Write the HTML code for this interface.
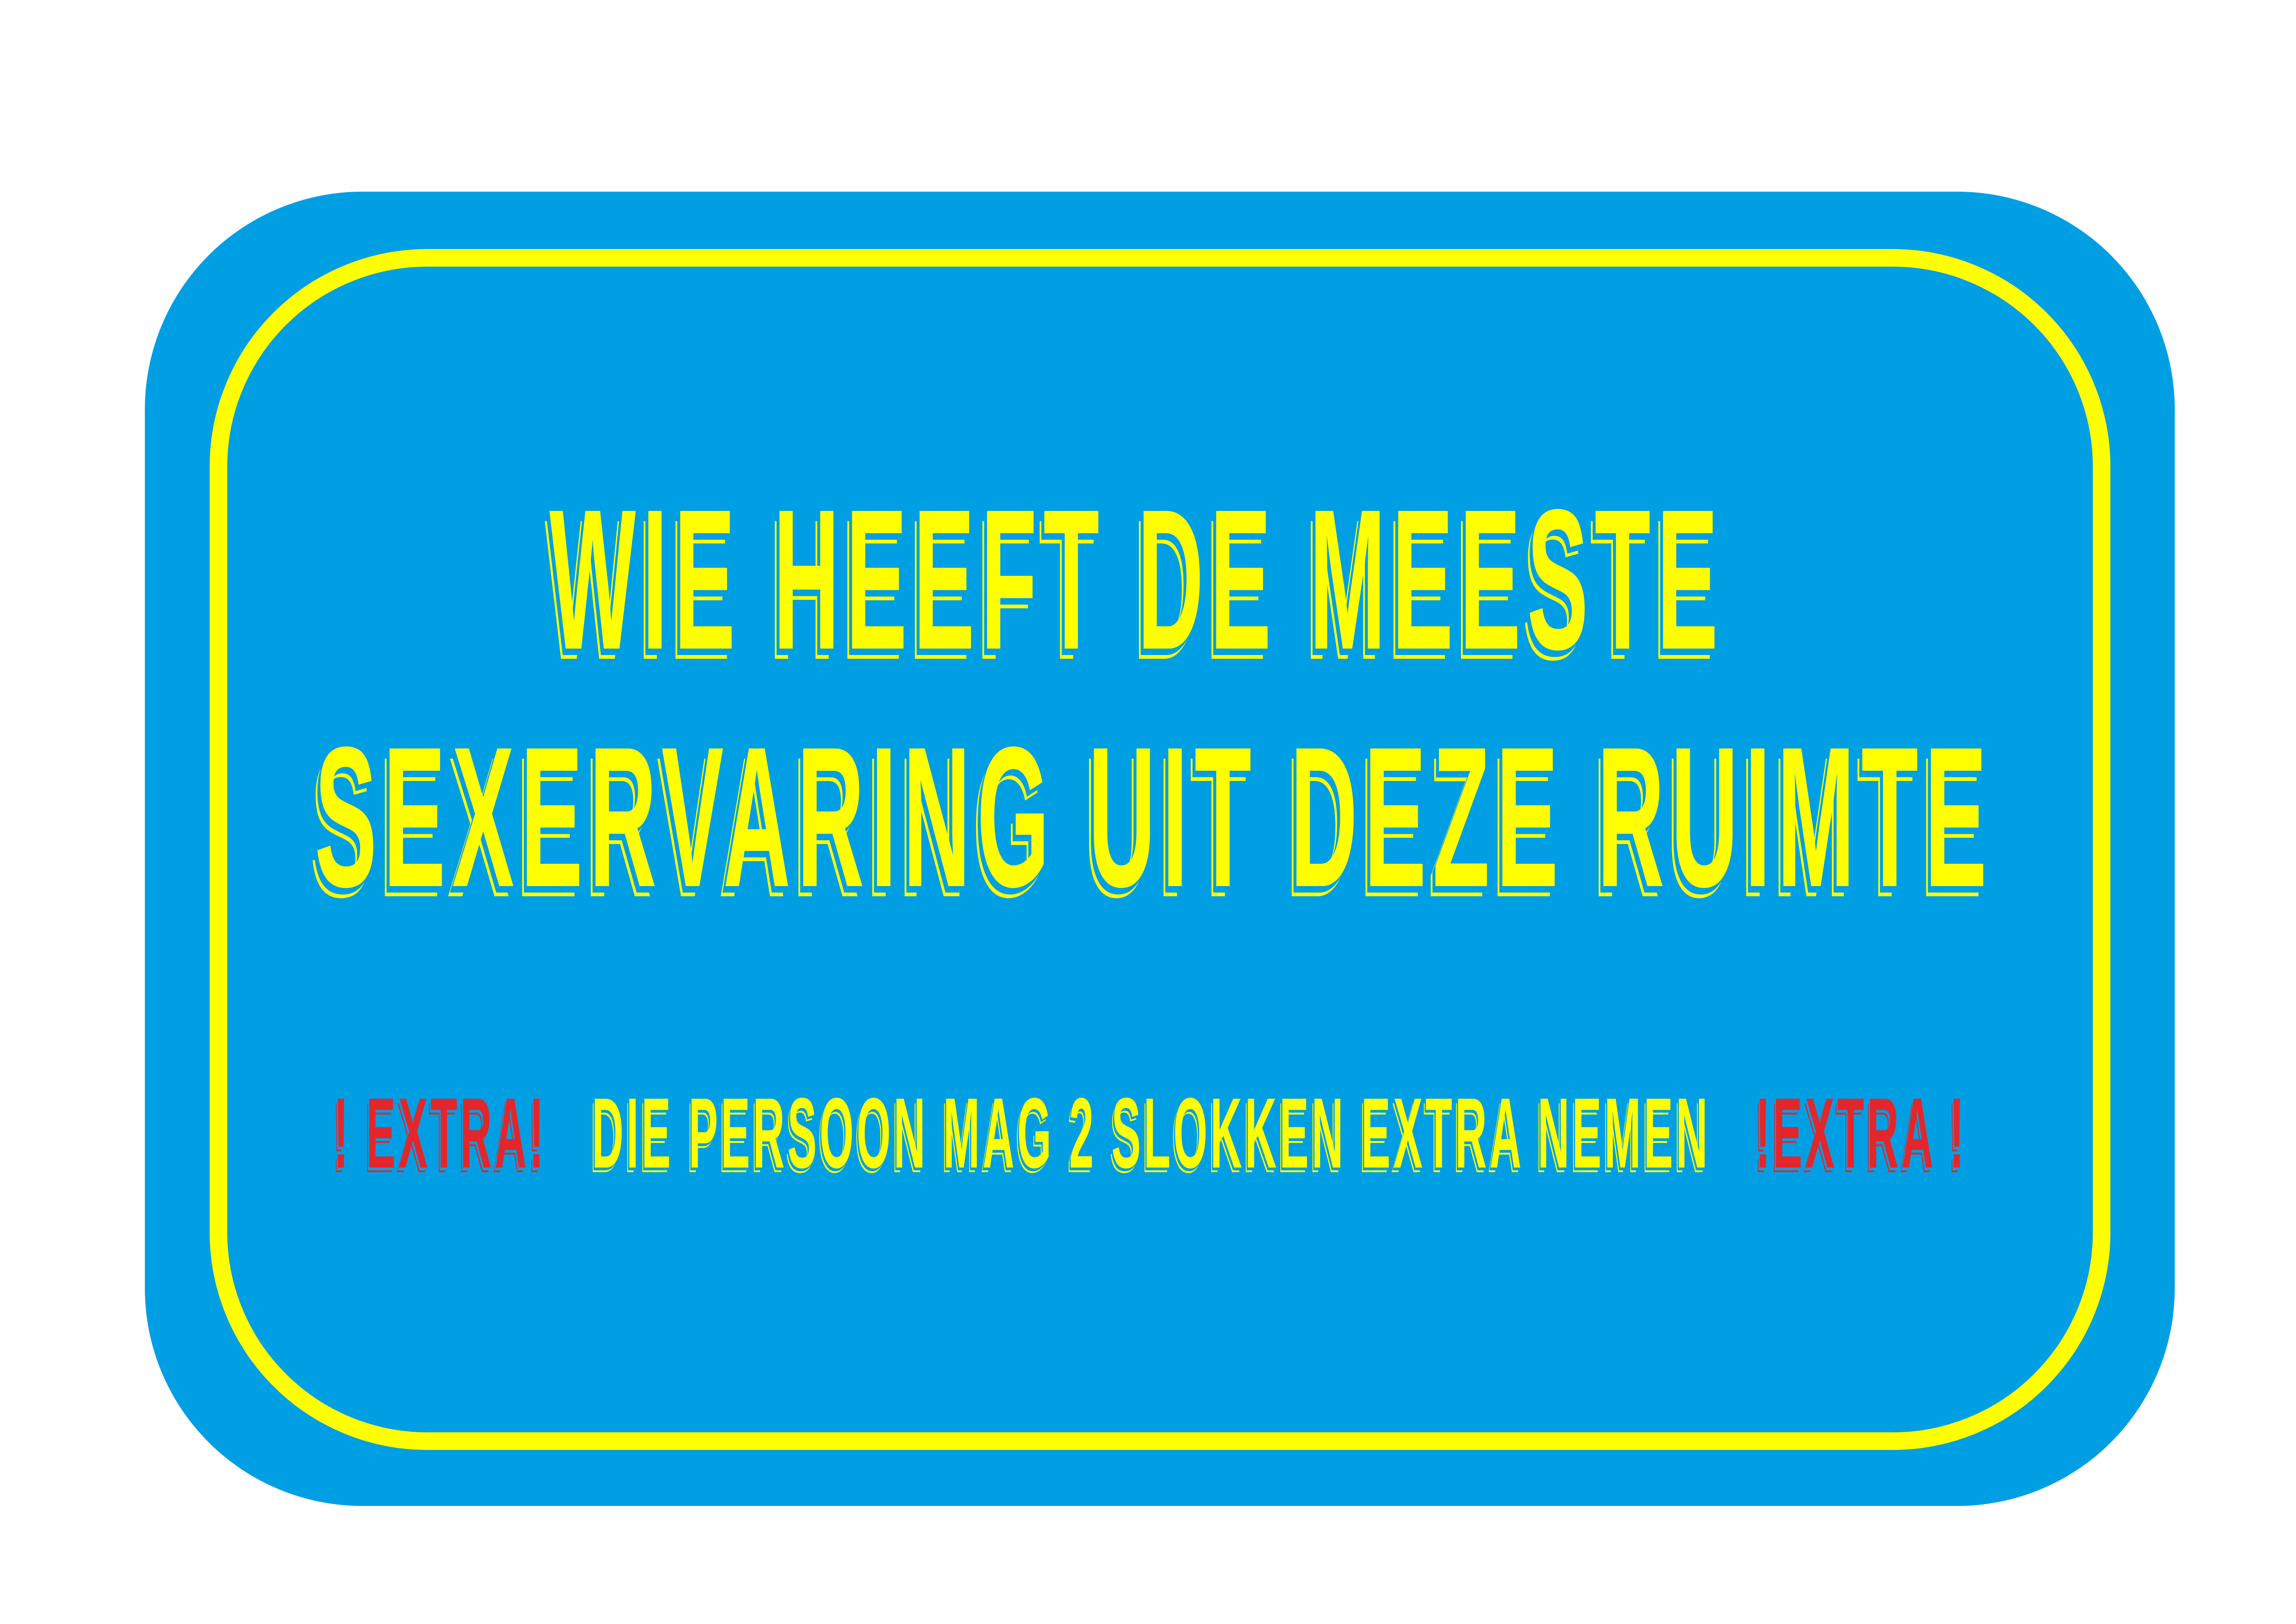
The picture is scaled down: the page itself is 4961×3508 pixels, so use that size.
<!DOCTYPE html>
<html><head><meta charset="utf-8"><style>
html,body{margin:0;padding:0;background:#fff;}
body{width:4961px;height:3508px;position:relative;overflow:hidden;}
.blue{position:absolute;left:313px;top:414px;width:4386px;height:2839px;background:#009fe3;border-radius:470px;}
.ring{position:absolute;left:453px;top:538px;width:4107px;height:2594px;border:38px solid #ffff00;border-radius:470px;box-sizing:border-box;}
.t{position:absolute;white-space:nowrap;font-family:"Liberation Sans Narrow","Liberation Sans",sans-serif;font-weight:bold;line-height:1;transform-origin:0 0;color:#ffff00;}
.big{font-size:432px;letter-spacing:30px;text-shadow:-14px 14px 0 #009fe3,-22px 22px 0 #ffff00;}
.small{font-size:216px;letter-spacing:14px;text-shadow:-6px 6px 0 #009fe3,-10px 10px 0 #ffff00;}
.r{color:#e3262b;text-shadow:-6px 6px 0 #009fe3,-10px 10px 0 #e3262b;}
</style></head><body>
<div class="blue"></div>
<div class="ring"></div>
<div class="t big" id="l1" style="top:1036px">WIE HEEFT DE MEESTE</div>
<div class="t big" id="l2" style="top:1549px">SEXERVARING UIT DEZE RUIMTE</div>
<div class="t small" id="l3" style="top:2339px"><span class="r">! EXTRA!</span>&nbsp;&nbsp; DIE PERSOON MAG 2 SLOKKEN EXTRA NEMEN &nbsp;&nbsp;<span class="r">!EXTRA !</span></div>
<script>
var cfg=[["l1",1187,3726],["l2",680,4307],["l3",721,4250]];
cfg.forEach(function(c){var e=document.getElementById(c[0]);var w=e.getBoundingClientRect().width;var s=(c[2]-c[1])/w;e.style.left=c[1]+"px";e.style.transform="scaleX("+s+")";});
</script>
</body></html>
